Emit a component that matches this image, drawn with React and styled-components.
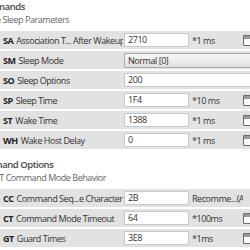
import React from "react";
import styled, { createGlobalStyle } from "styled-components";

const Global = createGlobalStyle`
  html, body { margin: 0; padding: 0; background: #ffffff; overflow: hidden; }
  body { font-family: "Open Sans", "Noto Sans", sans-serif; font-size: 9px; letter-spacing: -0.45px; color: #333; }
`;

const Panel = styled.div`
  width: 250px;
  height: 250px;
  overflow: hidden;
  background: #fff;
`;

const Scroller = styled.div`
  margin-top: -7px;
  display: flex;
  flex-direction: column;
`;

const SectionHead = styled.div`
  padding: 7px 0 5px 0;
  display: flex;
  flex-direction: column;
`;

const Title = styled.div`
  height: 13px;
  line-height: 13px;
  font-size: 9.5px;
  font-weight: 600;
  color: #4a4a4a;
  margin-left: ${(p) => p.$shift}px;
  white-space: nowrap;
`;

const Subtitle = styled.div`
  height: 13px;
  line-height: 13px;
  color: #666;
  margin-left: ${(p) => p.$shift}px;
  white-space: nowrap;
`;

const Row = styled.div`
  display: flex;
  align-items: center;
  height: 18px;
  margin-bottom: 2px;
  background: #e2e2e2;
  white-space: nowrap;
`;

const Label = styled.div`
  width: 120px;
  padding-left: 3px;
  flex: none;
  display: flex;
  align-items: center;
  overflow: hidden;
`;

const Code = styled.span`
  font-weight: 700;
  color: #222;
  margin-right: 3px;
`;

const Name = styled.span`
  color: #333;
`;

const Input = styled.div`
  box-sizing: border-box;
  flex: ${(p) => (p.$wide ? "1 0 auto" : "none")};
  width: ${(p) => (p.$wide ? "auto" : "65px")};
  height: 14px;
  margin-left: 1px;
  padding-left: 3px;
  line-height: 12px;
  background: #fff;
  border: 1px solid #c9c9c9;
  border-right-width: ${(p) => (p.$wide ? 0 : 1)}px;
  color: #333;
`;

const Select = styled.div`
  box-sizing: border-box;
  flex: 1 0 auto;
  height: 15px;
  margin-left: 1px;
  padding-left: 3px;
  line-height: 13px;
  background: linear-gradient(#f7f7f7, #e0e0e0);
  border: 1px solid #a9a9a9;
  border-right: none;
  border-radius: 2px 0 0 2px;
  color: #333;
`;

const Unit = styled.div`
  width: 51px;
  margin-left: 3px;
  flex: none;
  overflow: hidden;
  color: #333;
`;

const Btn = styled.div`
  box-sizing: border-box;
  flex: none;
  width: 10px;
  height: 11px;
  border: 1px solid #6b6b6b;
  border-radius: 1px;
  background: linear-gradient(#9a9a9a 0 3px, #fafafa 3px);
`;

const rows1 = [
  { code: "SA", name: "Association T... After Wakeup", value: "2710", unit: "*1 ms", btn: true },
  { code: "SM", name: "Sleep Mode", select: "Normal [0]" },
  { code: "SO", name: "Sleep Options", value: "200", wide: true },
  { code: "SP", name: "Sleep Time", value: "1F4", unit: "*10 ms", btn: true },
  { code: "ST", name: "Wake Time", value: "1388", unit: "*1 ms", btn: true },
  { code: "WH", name: "Wake Host Delay", value: "0", unit: "*1 ms", btn: true },
];

const rows2 = [
  { code: "CC", name: "Command Seq...e Character", value: "2B", unit: "Recomme...(ASCII)" },
  { code: "CT", name: "Command Mode Timeout", value: "64", unit: "*100ms", btn: true },
  { code: "GT", name: "Guard Times", value: "3E8", unit: "*1ms", btn: true },
];

function ParamRow({ r }) {
  return (
    <Row>
      <Label>
        <Code>{r.code}</Code>
        <Name>{r.name}</Name>
      </Label>
      {r.select ? (
        <Select>{r.select}</Select>
      ) : (
        <Input $wide={r.wide}>{r.value}</Input>
      )}
      {r.unit && <Unit>{r.unit}</Unit>}
      {r.btn && <Btn />}
    </Row>
  );
}

export default function App() {
  return (
    <Panel>
      <Global />
      <Scroller>
        <SectionHead>
          <Title $shift={-48}>Sleep Commands</Title>
          <Subtitle $shift={-4}>e Sleep Parameters</Subtitle>
        </SectionHead>
        {rows1.map((r) => (
          <ParamRow key={r.code} r={r} />
        ))}
        <SectionHead>
          <Title $shift={-26}>Command Options</Title>
          <Subtitle $shift={-6}>AT Command Mode Behavior</Subtitle>
        </SectionHead>
        {rows2.map((r) => (
          <ParamRow key={r.code} r={r} />
        ))}
      </Scroller>
    </Panel>
  );
}
